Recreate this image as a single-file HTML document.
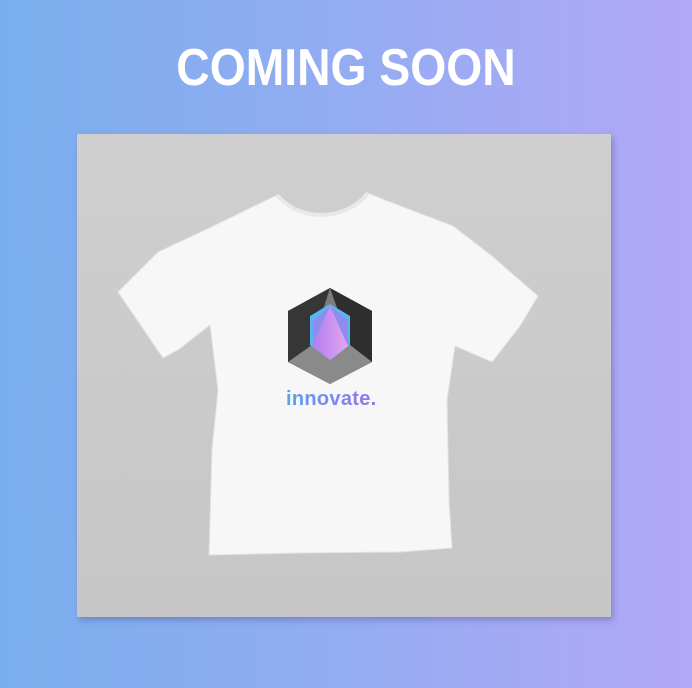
<!DOCTYPE html>
<html><head><style>
html,body{margin:0;padding:0;}
body{width:692px;height:688px;overflow:hidden;background:linear-gradient(90deg,#79aeee 0%,#94acf2 50%,#b2a8f6 100%);position:relative;font-family:"Liberation Sans",sans-serif;}
h1{position:absolute;left:0;width:692px;top:38px;margin:0;text-align:center;color:#fff;font-size:52px;font-weight:bold;line-height:60px;transform:scaleX(0.89);}
.box{position:absolute;left:77px;top:134px;width:534px;height:483px;background:linear-gradient(180deg,#cfcfcf,#c6c6c6);box-shadow:2px 3px 6px rgba(60,60,120,0.35);}
svg{position:absolute;left:0;top:0;}
</style></head><body>
<h1>COMING SOON</h1>
<div class="box"></div>
<svg width="692" height="688" viewBox="0 0 692 688">
<defs>
<linearGradient id="tg" x1="0" x2="1"><stop offset="0" stop-color="#5aa2ea"/><stop offset="1" stop-color="#9f6ff0"/></linearGradient>
<linearGradient id="pg" x1="0" x2="1"><stop offset="0" stop-color="#b07cf0"/><stop offset="1" stop-color="#e2a6ee"/></linearGradient>
</defs>
<path d="M277,195 C300,222 345,222 368,193 L385,200 L453,226 L492,256 L538,296 L520,326 L492,362 L455,346 L447,400 L449,500 L452,548 L400,552 L300,553 L209,555 L212,450 L218,390 L210,325 L178,350 L163,358 L118,292 L158,252 L205,230 Z" fill="#f7f7f7" stroke="#e2e2e2" stroke-width="1"/>
<path d="M277,195 C300,222 345,222 368,193" fill="none" stroke="#e8e8e8" stroke-width="4"/>
<g>
<polygon points="330,288 372,311 372,362 330,384 288,362 288,311" fill="#4a4a4a"/>
<polygon points="330,288 288,311 288,362 312,345" fill="#363636"/>
<polygon points="330,288 372,311 372,362 350,345" fill="#2e2e2e"/>
<polygon points="312,345 350,345 372,362 330,384 288,362" fill="#8a8a8a"/>
<polygon points="330,288 350,345 312,345" fill="#7c7c7c"/>
<polygon points="330,304 350,316 350,345 330,360 310,345 310,316" fill="#5ab6ee"/>
<polygon points="330,306 348,320 348,345 330,358 314,345 312,322" fill="#8f8cf0"/>
<polygon points="330,306 348,346 330,360 312,346" fill="url(#pg)"/>
</g>
<text x="286" y="405" font-family="Liberation Sans,sans-serif" font-weight="bold" font-size="20" fill="url(#tg)" letter-spacing="0.3">innovate.</text>
</svg>
</body></html>
